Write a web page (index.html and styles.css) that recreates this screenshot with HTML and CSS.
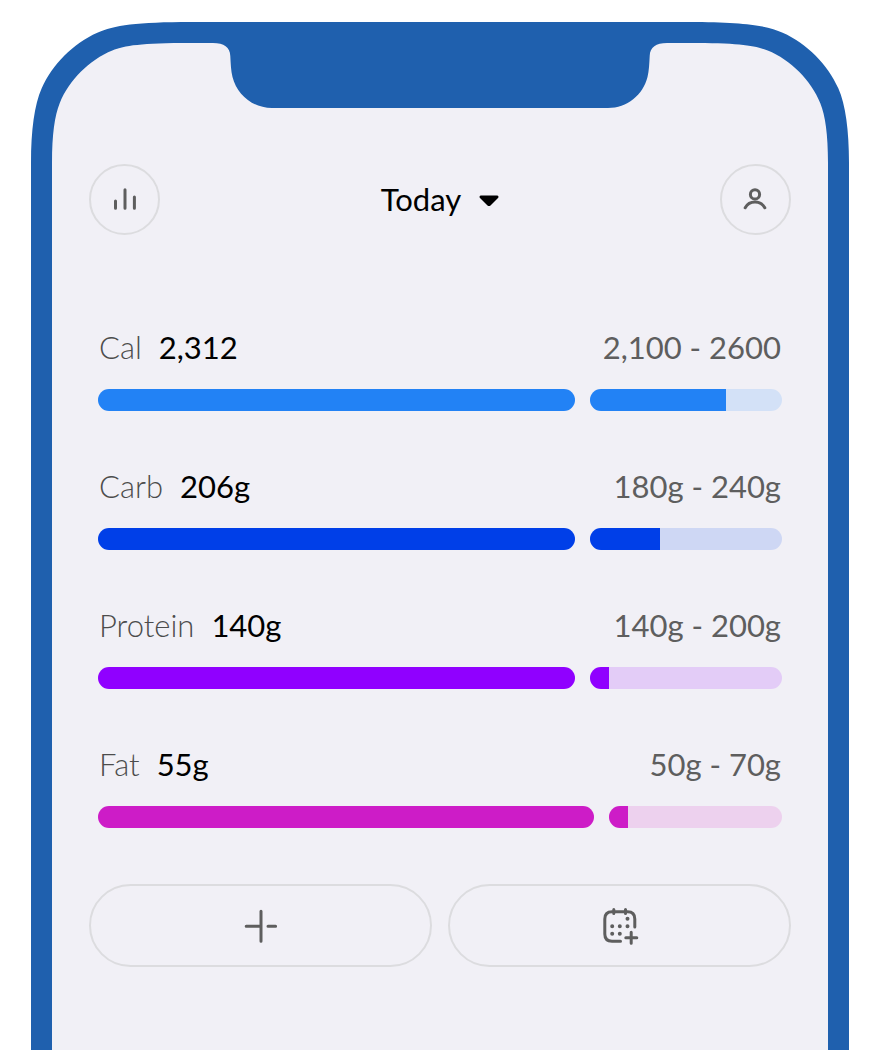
FILE: index.html
```html
<!DOCTYPE html>
<html lang="en">
<head>
<meta charset="utf-8">
<meta name="viewport" content="width=device-width, initial-scale=1">
<title>Today</title>
<link rel="stylesheet" href="styles.css">
</head>
<body>
<div class="phone">
  <div class="bezel" aria-hidden="true">
    <svg class="corner" viewBox="0 0 160 141"><path class="face" d="M10 141V95L42 42L95 10H160V141Z"/><path d="M0 141C0 108 3.4 82.8 10.7 66.3C21.2 42.5 42.5 21.2 66.3 10.7C82.8 3.4 106 0 160 0V21C109 21 94 23.5 81.3 28.5C58.5 37.7 37.7 58.5 28.7 81.3C23.7 94 21 112 21 141Z"/></svg>
    <span class="bezel-bar"></span>
    <svg class="notch" viewBox="0 0 454 86"><path d="M0 0H454V21C443 21 437 25 436.7 34C436.3 42 436 49 434.5 55C430 73 414 86 395 86H59C40 86 24 73 19.5 55C18 49 17.7 42 17.3 34C17 25 11 21 0 21Z"/></svg>
    <span class="bezel-bar"></span>
    <svg class="corner corner-right" viewBox="0 0 160 141"><path class="face" d="M10 141V95L42 42L95 10H160V141Z"/><path d="M0 141C0 108 3.4 82.8 10.7 66.3C21.2 42.5 42.5 21.2 66.3 10.7C82.8 3.4 106 0 160 0V21C109 21 94 23.5 81.3 28.5C58.5 37.7 37.7 58.5 28.7 81.3C23.7 94 21 112 21 141Z"/></svg>
  </div>
  <main class="screen">
    <header class="topbar">
      <button class="round" type="button" aria-label="Statistics">
        <svg class="icon-small" viewBox="0 0 28 28"><path d="M4.5 16v7.3M14 4.7v18.6M23.4 12v11.3"/></svg>
      </button>
      <button class="day" type="button">Today
        <svg class="caret" viewBox="0 0 20 12"><path d="M2 0.5H18C19.5 0.5 20 2 19 3L11.5 10.4Q10 11.8 8.5 10.4L1 3C0 2 0.5 0.5 2 0.5Z"/></svg>
      </button>
      <button class="round" type="button" aria-label="Profile">
        <svg class="icon-small" viewBox="0 0 28 28"><circle cx="14" cy="9.4" r="4.6"/><path d="M4.2 22.8C6.3 19 10 17.1 14 17.1S21.7 19 23.8 22.8"/></svg>
      </button>
    </header>

    <section class="goals">
      <div class="goal cal">
        <div class="figures"><span class="name">Cal</span><span class="value">2,312</span><span class="range">2,100 - 2600</span></div>
        <div class="track"><span class="base"></span><span class="target"><span class="fill" style="width:70.6%"></span></span></div>
      </div>
      <div class="goal carb">
        <div class="figures"><span class="name">Carb</span><span class="value">206g</span><span class="range">180g - 240g</span></div>
        <div class="track"><span class="base"></span><span class="target"><span class="fill" style="width:36.4%"></span></span></div>
      </div>
      <div class="goal protein">
        <div class="figures"><span class="name">Protein</span><span class="value">140g</span><span class="range">140g - 200g</span></div>
        <div class="track"><span class="base"></span><span class="target"><span class="fill" style="width:9.9%"></span></span></div>
      </div>
      <div class="goal fat">
        <div class="figures"><span class="name">Fat</span><span class="value">55g</span><span class="range">50g - 70g</span></div>
        <div class="track"><span class="base"></span><span class="target"><span class="fill" style="width:11%"></span></span></div>
      </div>
    </section>

    <div class="actions">
      <button class="pill" type="button" aria-label="Add entry">
        <svg class="icon-plus" viewBox="0 0 36 36"><path d="M18 3.2V33.2M3.2 18.2H18M25 18.2H32.6"/></svg>
      </button>
      <button class="pill" type="button" aria-label="Add to calendar">
        <svg class="icon-calendar" viewBox="0 0 40 40"><path d="M20.5 35.2H12Q4.8 35.2 4.8 28V13Q4.8 5.8 12 5.8H27.6Q34.8 5.8 34.8 13V21M13.8 3.5V7.5M25.5 3.5V7.5M31.2 26.2V37.2M25.8 31.8H36.8"/><path class="dots" d="M27.5 12.8h0M12.2 20.2h0M19.8 20.2h0M27.5 20.2h0M12.2 27.8h0M19.8 27.8h0"/></svg>
      </button>
    </div>
  </main>
</div>
</body>
</html>
```
FILE: styles.css
```css
:root {
  --frame: #1f60ae;
  --surface: #f1f0f6;
  --ink: #5e5e5e;
  --line: #dcdcdf;
}

* { box-sizing: border-box; }

body {
  margin: 0;
  background: #fff;
  font-family: Lato, "Open Sans", sans-serif;
  font-size: 31px;
  line-height: 36px;
  color: #000;
}

.phone {
  display: flex;
  flex-direction: column;
  min-height: 100vh;
  padding: 22px 31px 0;
}

/* Device frame: curved corners and notch, joined by stretchy bars */
.bezel {
  display: flex;
  align-items: flex-start;
  height: 141px;
  background: linear-gradient(var(--surface), var(--surface)) center / calc(100% - 318px) 100% no-repeat;
}
.bezel svg { flex: none; fill: var(--frame); }
.bezel .face { fill: var(--surface); }
.bezel-bar { flex: 1; height: 21px; background: var(--frame); }
.corner { width: 160px; height: 141px; }
.corner-right { transform: scaleX(-1); }
.notch { width: 454px; height: 86px; }

.screen {
  flex: 1;
  padding: 0 37px 80px;
  border: solid var(--frame);
  border-width: 0 21px;
  background: var(--surface);
}

button {
  display: flex;
  align-items: center;
  justify-content: center;
  padding: 0;
  border: 0;
  background: none;
  font: inherit;
  color: inherit;
  cursor: pointer;
}
button svg {
  flex: none;
  fill: none;
  stroke: var(--ink);
  stroke-width: 3;
  stroke-linecap: round;
}

.topbar {
  display: flex;
  align-items: center;
  justify-content: space-between;
  min-height: 72px;
}
.round {
  width: 71px;
  height: 71px;
  border: 2px solid var(--line);
  border-radius: 50%;
}
.icon-small { width: 28px; height: 28px; }
.day { gap: 18px; }
.day .caret {
  width: 20px;
  height: 12px;
  margin-top: 4px;
  fill: #000;
  stroke: none;
}

.goals {
  display: flex;
  flex-direction: column;
  gap: 57px;
  padding: 94px 9px 56px;
}
.figures { display: flex; gap: 17px; padding: 0 1px; color: var(--ink); }
.name { font-weight: 300; color: #4c4c4c; }
.value { color: #000; }
.range { margin-left: auto; }

.track { display: flex; gap: 15px; height: 22px; margin-top: 24px; }
.base { flex: 477; border-radius: 11px; background: var(--tone); }
.target {
  flex: 192;
  display: flex;
  overflow: hidden;
  border-radius: 11px;
  background: var(--tint);
}
.fill { background: var(--tone); }
.cal { --tone: #2282f5; --tint: #d3e1f7; }
.carb { --tone: #003fe8; --tint: #ced7f4; }
.protein { --tone: #9000ff; --tint: #e3ccf7; }
.fat { --tone: #cd1cc7; --tint: #edd1ee; }
.fat .base { flex-grow: 496; }
.fat .target { flex-grow: 173; }

.actions { display: flex; gap: 16px; }
.pill {
  flex: 1;
  height: 83px;
  border: 2px solid var(--line);
  border-radius: 42px;
}
.icon-plus { width: 36px; height: 36px; }
.icon-calendar { width: 40px; height: 40px; }
.pill .dots { stroke-width: 4; }
```
